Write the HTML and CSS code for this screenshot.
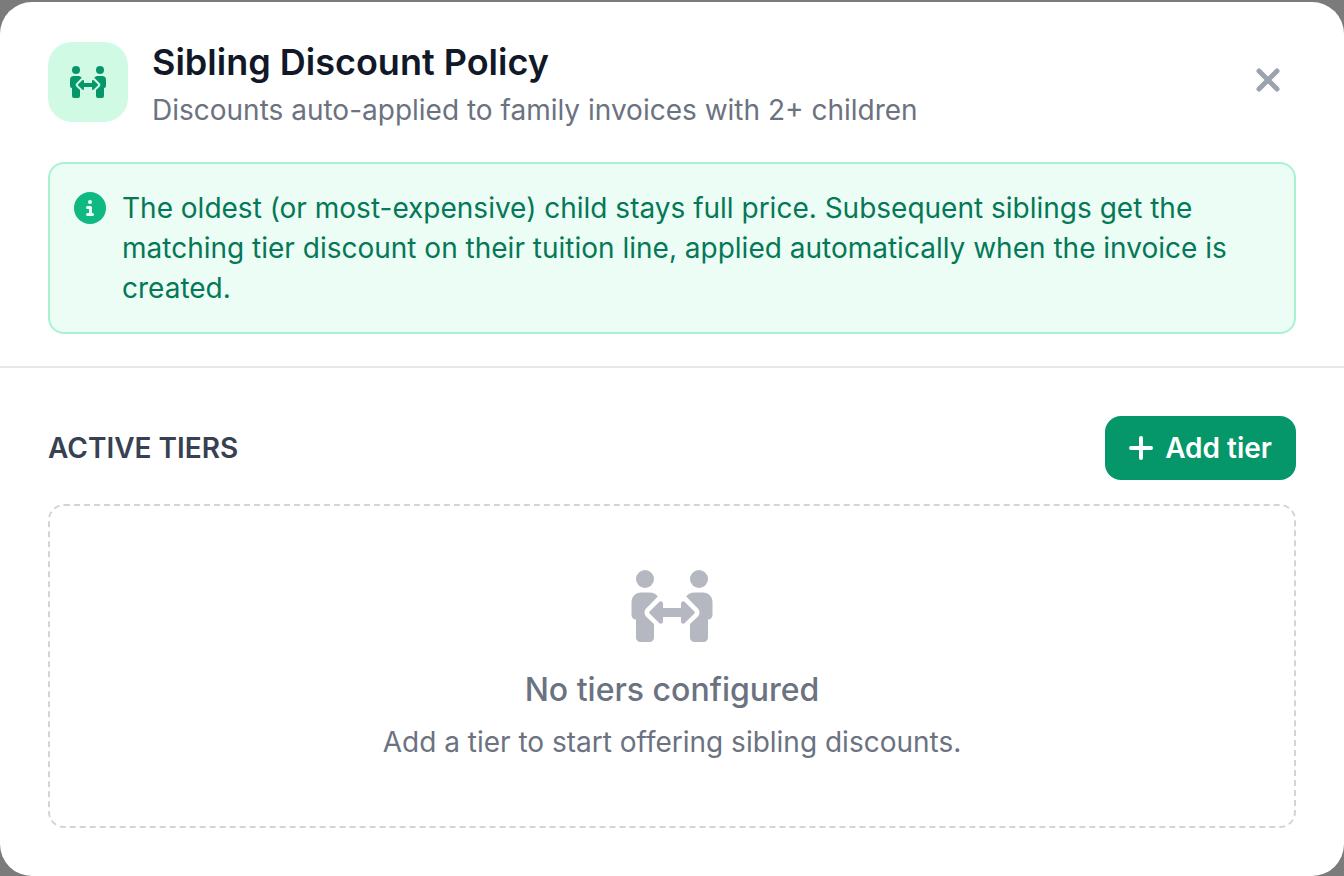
FILE: index.html
```html
<!DOCTYPE html>
<html lang="en">
  <head>
    <meta charset="UTF-8" />
    <meta name="viewport" content="width=device-width, initial-scale=1.0" />
    <title>Sibling Discount Policy</title>
    <link rel="stylesheet" href="styles.css">
  </head>
  <body>
    <!-- shared by the header badge and the empty state -->
    <svg class="sprite" aria-hidden="true">
      <symbol id="people-arrows" viewBox="0 0 90 72">
        <g id="person">
          <circle cx="18" cy="9" r="9" />
          <path d="M13.500 22.500h9c3.600 0 6.500 1.500 8.300 4L19.300 38.300a5.800 5.800 0 0 0 0 8.400L27 54v13.500a4.500 4.500 0 0 1-4.500 4.500h-9A4.500 4.500 0 0 1 9 67.500V49.500A4.500 4.500 0 0 1 4.500 45V31.500a9 9 0 0 1 9-9z" />
        </g>
        <use href="#person" transform="translate(90 0) scale(-1 1)" />
        <path d="M22.800 41.300 32.200 31.900c1.400-1.400 3.800-.4 3.800 1.600V38h18v-4.500c0-2 2.400-3 3.800-1.600l9.400 9.400c.7.700.7 1.700 0 2.400l-9.400 9.400c-1.400 1.400-3.800.4-3.800-1.600V47H36v4.500c0 2-2.400 3-3.800 1.600l-9.400-9.400c-.7-.7-.7-1.700 0-2.400z" />
      </symbol>
    </svg>

    <div class="modal" role="dialog" aria-labelledby="modal-title">
      <header class="modal-header">
        <div class="title-row">
          <div class="badge">
            <svg class="badge-icon" aria-hidden="true"><use href="#people-arrows" /></svg>
          </div>
          <div class="titles">
            <h2 class="title" id="modal-title">Sibling Discount Policy</h2>
            <p class="subtitle">Discounts auto-applied to family invoices with 2+ children</p>
          </div>
          <button class="close-btn" type="button" aria-label="Close">
            <svg width="24" height="24" viewBox="0 0 24 24" aria-hidden="true">
              <path d="M3 3l18 18M21 3L3 21" />
            </svg>
          </button>
        </div>

        <div class="notice">
          <svg class="notice-icon" viewBox="0 0 32 32" aria-hidden="true">
            <circle class="notice-disc" cx="16" cy="16" r="16" />
            <circle class="notice-dot" cx="16" cy="10" r="2" />
            <path class="notice-stem" d="M13.500 15.500h3v7M13.500 22.500h5" />
          </svg>
          <p class="notice-text">
            The oldest (or most-expensive) child stays full price. Subsequent
            siblings get the matching tier discount on their tuition line,
            applied automatically when the invoice is created.
          </p>
        </div>
      </header>

      <section class="modal-body">
        <div class="section-row">
          <h3 class="section-title">Active Tiers</h3>
          <button class="add-btn" type="button">
            <svg width="24" height="24" viewBox="0 0 24 24" aria-hidden="true">
              <path d="M12 2v20M2 12h20" />
            </svg>
            Add tier
          </button>
        </div>

        <div class="empty">
          <svg class="empty-icon" aria-hidden="true"><use href="#people-arrows" /></svg>
          <p class="empty-title">No tiers configured</p>
          <p class="empty-text">Add a tier to start offering sibling discounts.</p>
        </div>
      </section>
    </div>
  </body>
</html>
```
FILE: styles.css
```css
* {
  box-sizing: border-box;
}
body {
  margin: 0;
  padding-top: 2px;
  background-color: #7b7b7b;
  font-family: Inter, "Liberation Sans", sans-serif;
  font-size: 28px;
  line-height: 40px;
}
h2,
h3,
p {
  margin: 0;
}
button {
  border: 0;
  font-family: inherit;
  font-size: inherit;
  line-height: inherit;
  cursor: pointer;
}
svg {
  flex-shrink: 0;
}
.sprite {
  position: absolute;
  width: 0;
  height: 0;
}
.modal {
  background-color: #fff;
  border-radius: 32px;
}
.modal-header {
  padding: 40px 48px 32px;
  border-bottom: 2px solid #e5e7eb;
}
.title-row {
  display: flex;
  align-items: flex-start;
  gap: 24px;
}
.badge {
  display: flex;
  align-items: center;
  justify-content: center;
  width: 80px;
  height: 80px;
  border-radius: 24px;
  background-color: #d1fae5;
  color: #059669;
}
.badge-icon {
  width: 40px;
  height: 32px;
  fill: currentColor;
}
.titles {
  flex: 1;
}
.title {
  color: #111827;
  font-size: 36px;
  font-weight: 600;
  line-height: 40px;
}
.subtitle {
  margin-top: 8px;
  color: #6b7280;
}
.close-btn {
  display: flex;
  align-items: center;
  justify-content: center;
  width: 56px;
  height: 76px;
  padding: 0;
  background: none;
}
.close-btn svg {
  fill: none;
  stroke: #9ca3af;
  stroke-width: 5;
  stroke-linecap: round;
}
.notice {
  display: flex;
  align-items: flex-start;
  gap: 16px;
  margin-top: 32px;
  padding: 24px;
  border: 2px solid #a7f3d0;
  border-radius: 16px;
  background-color: #ecfdf5;
  color: #047857;
}
.notice-icon {
  width: 32px;
  height: 32px;
  margin-top: 4px;
}
.notice-disc {
  fill: #10b981;
}
.notice-dot {
  fill: #ecfdf5;
}
.notice-stem {
  fill: none;
  stroke: #ecfdf5;
  stroke-width: 3;
  stroke-linecap: round;
  stroke-linejoin: round;
}
.modal-body {
  padding: 48px;
}
.section-row {
  display: flex;
  align-items: center;
  justify-content: space-between;
}
.section-title {
  color: #374151;
  font-size: 28px;
  font-weight: 600;
  text-transform: uppercase;
}
.add-btn {
  display: flex;
  align-items: center;
  gap: 12px;
  padding: 12px 24px;
  border-radius: 16px;
  background-color: #059669;
  color: #fff;
  font-weight: 600;
}
.add-btn svg {
  fill: none;
  stroke: currentColor;
  stroke-width: 4;
  stroke-linecap: round;
}
.empty {
  display: flex;
  flex-direction: column;
  align-items: center;
  margin-top: 24px;
  padding: 64px 24px;
  border: 2px dashed #d1d5db;
  border-radius: 16px;
  color: #6b7280;
  text-align: center;
}
.empty-icon {
  width: 90px;
  height: 72px;
  fill: #b5b8c1;
}
.empty-title {
  margin-top: 24px;
  font-size: 32px;
  font-weight: 500;
  line-height: 48px;
}
.empty-text {
  margin-top: 8px;
}
```
